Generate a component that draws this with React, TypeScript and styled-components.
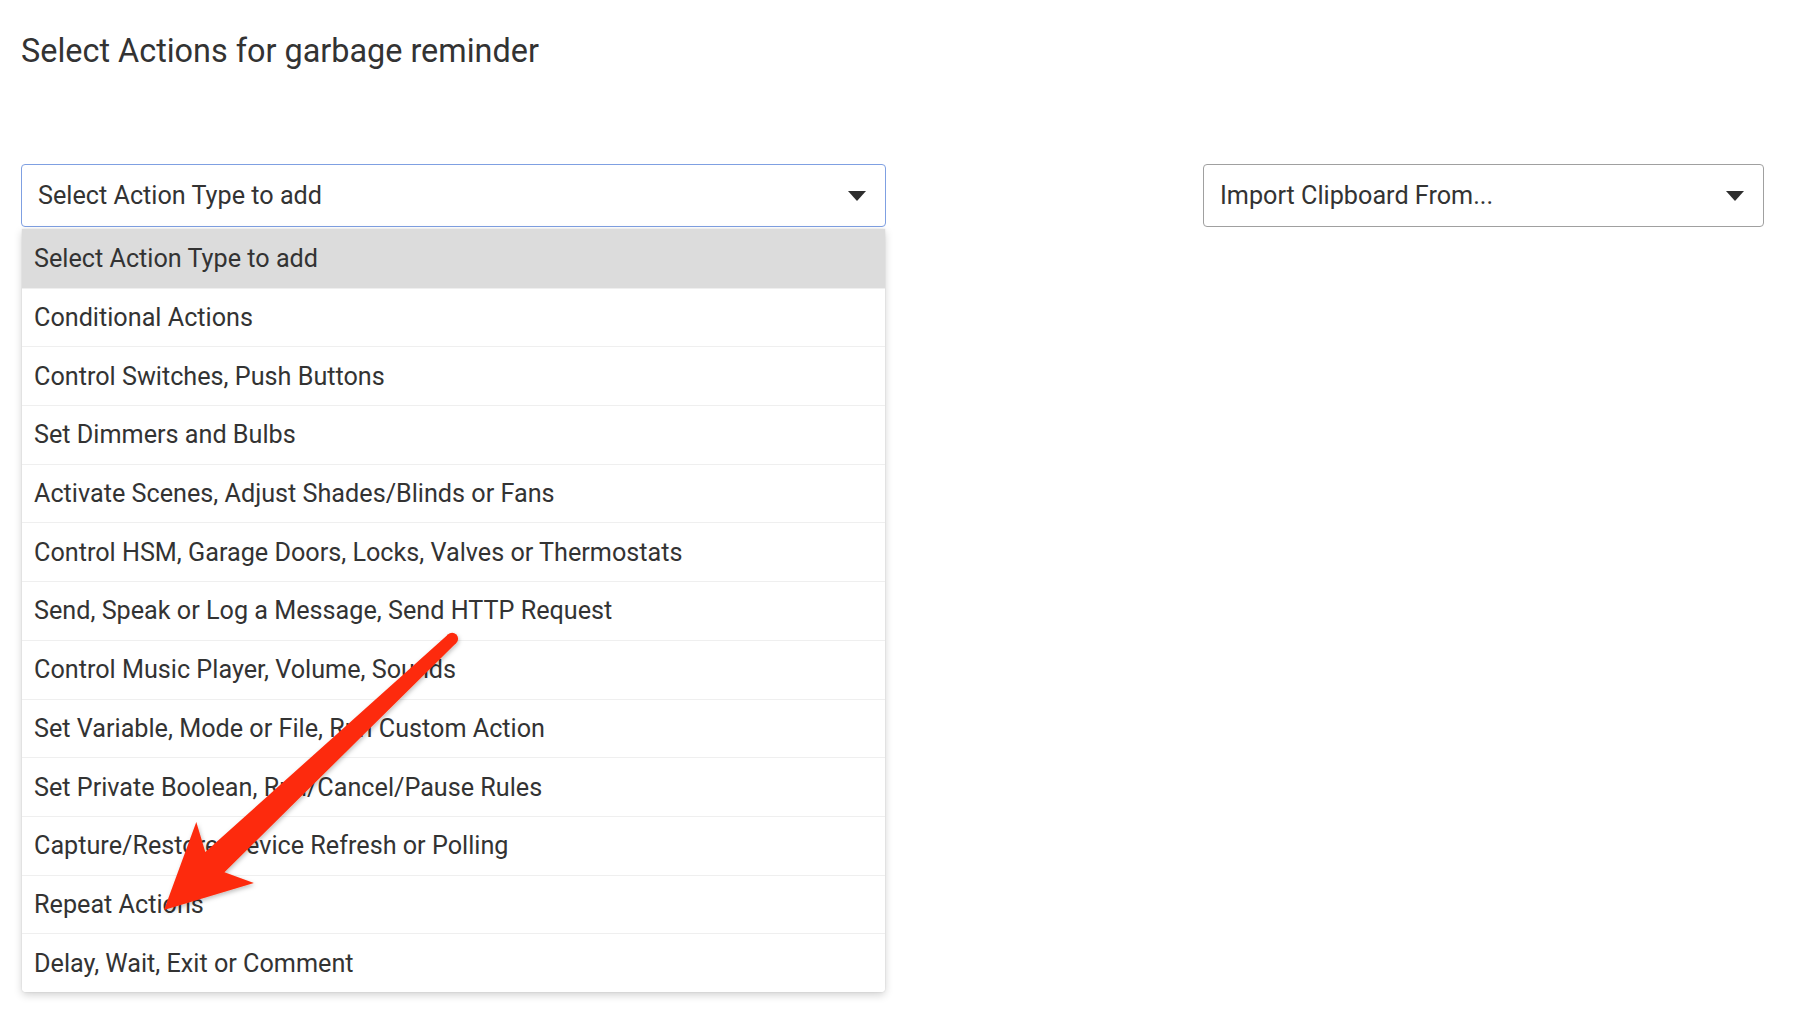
import React from "react";
import styled, { createGlobalStyle } from "styled-components";

const GlobalStyle = createGlobalStyle`
  html, body {
    margin: 0;
    padding: 0;
    background: #ffffff;
  }
  body {
    font-family: Roboto, "Noto Sans", "Liberation Sans", sans-serif;
    color: #333333;
  }
`;

const Page = styled.div`
  position: relative;
  width: 1820px;
  height: 1028px;
  overflow: hidden;
  box-sizing: border-box;
  padding: 32px 56px 0 21px;
`;

const Title = styled.h1`
  margin: 0;
  font-size: 32.4px;
  line-height: 38px;
  font-weight: 400;
  color: #333333;
`;

const ControlsRow = styled.div`
  margin-top: 94px;
  display: flex;
  justify-content: space-between;
  align-items: flex-start;
`;

const SelectWrap = styled.div<{ $width: number }>`
  position: relative;
  width: ${(p) => p.$width}px;
`;

const SelectBox = styled.div<{ $focused?: boolean }>`
  box-sizing: border-box;
  height: 63px;
  display: flex;
  align-items: center;
  justify-content: space-between;
  padding: 0 19px 0 16px;
  border: 1px solid ${(p) => (p.$focused ? "#7fa0e2" : "#a0a0a0")};
  border-radius: 4px;
  background: #ffffff;
  font-size: 25.2px;
  color: #333333;
`;

const Caret = styled.svg`
  width: 18px;
  height: 10px;
  flex: none;
`;

const Menu = styled.ul`
  position: absolute;
  top: 65px;
  left: 1px;
  right: 1px;
  margin: 0;
  padding: 0;
  list-style: none;
  background: #ffffff;
  border-radius: 0 0 4px 4px;
  box-shadow: 0 3px 8px rgba(0, 0, 0, 0.18), 0 0 2px rgba(0, 0, 0, 0.12);
  overflow: hidden;
`;

const MenuItem = styled.li<{ $selected?: boolean }>`
  box-sizing: border-box;
  height: 58.7px;
  display: flex;
  align-items: center;
  padding: 0 12px;
  font-size: 25.2px;
  color: #333333;
  background: ${(p) => (p.$selected ? "#dcdcdc" : "#ffffff")};
  border-top: 1px solid ${(p) => (p.$selected ? "#dcdcdc" : "#efefef")};
  &:first-child {
    border-top: none;
  }
`;

const ArrowOverlay = styled.svg`
  position: absolute;
  left: 0;
  top: 0;
  width: 1820px;
  height: 1028px;
  pointer-events: none;
`;

const items = [
  "Select Action Type to add",
  "Conditional Actions",
  "Control Switches, Push Buttons",
  "Set Dimmers and Bulbs",
  "Activate Scenes, Adjust Shades/Blinds or Fans",
  "Control HSM, Garage Doors, Locks, Valves or Thermostats",
  "Send, Speak or Log a Message, Send HTTP Request",
  "Control Music Player, Volume, Sounds",
  "Set Variable, Mode or File, Run Custom Action",
  "Set Private Boolean, Run/Cancel/Pause Rules",
  "Capture/Restore, Device Refresh or Polling",
  "Repeat Actions",
  "Delay, Wait, Exit or Comment",
];

const CaretIcon = () => (
  <Caret viewBox="0 0 18 10">
    <polygon points="0,0 18,0 9,10" fill="#2e2e2e" />
  </Caret>
);

export default function App() {
  return (
    <>
      <GlobalStyle />
      <Page>
        <Title>Select Actions for garbage reminder</Title>
        <ControlsRow>
          <SelectWrap $width={865}>
            <SelectBox $focused>
              <span>Select Action Type to add</span>
              <CaretIcon />
            </SelectBox>
            <Menu>
              {items.map((t, i) => (
                <MenuItem key={t} $selected={i === 0}>
                  {t}
                </MenuItem>
              ))}
            </Menu>
          </SelectWrap>
          <SelectWrap $width={561}>
            <SelectBox>
              <span>Import Clipboard From...</span>
              <CaretIcon />
            </SelectBox>
          </SelectWrap>
        </ControlsRow>
        <ArrowOverlay viewBox="0 0 1820 1028">
          <defs>
            <filter id="arrowShadow" x="-20%" y="-20%" width="140%" height="140%">
              <feDropShadow dx="1" dy="2" stdDeviation="2" floodColor="#000" floodOpacity="0.25" />
            </filter>
          </defs>
          <g filter="url(#arrowShadow)" fill="#fd2c0c">
            <polygon points="164,910 196.3,821.9 205.3,852.1 448,634.4 456.2,643 224.5,872.2 253.9,883.1" />
            <circle cx="452.1" cy="638.7" r="6" />
          </g>
        </ArrowOverlay>
      </Page>
    </>
  );
}
